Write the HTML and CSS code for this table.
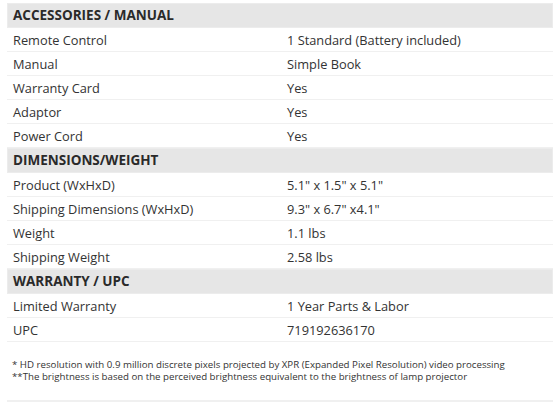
FILE: index.html
```html
<!DOCTYPE html>
<html>
<head>
<meta charset="utf-8">
<link rel="stylesheet" href="styles.css">
</head>
<body>
<div class="spec">
  <div class="head">ACCESSORIES / MANUAL</div>
  <div class="row"><span class="k">Remote Control</span><span class="v">1 Standard (Battery included)</span></div>
  <div class="row"><span class="k">Manual</span><span class="v">Simple Book</span></div>
  <div class="row"><span class="k">Warranty Card</span><span class="v">Yes</span></div>
  <div class="row"><span class="k">Adaptor</span><span class="v">Yes</span></div>
  <div class="row"><span class="k">Power Cord</span><span class="v">Yes</span></div>
  <div class="head">DIMENSIONS/WEIGHT</div>
  <div class="row"><span class="k">Product (WxHxD)</span><span class="v">5.1" x 1.5" x 5.1"</span></div>
  <div class="row"><span class="k">Shipping Dimensions (WxHxD)</span><span class="v">9.3" x 6.7" x4.1"</span></div>
  <div class="row"><span class="k">Weight</span><span class="v">1.1 lbs</span></div>
  <div class="row"><span class="k">Shipping Weight</span><span class="v">2.58 lbs</span></div>
  <div class="head">WARRANTY / UPC</div>
  <div class="row"><span class="k">Limited Warranty</span><span class="v">1 Year Parts &amp; Labor</span></div>
  <div class="row"><span class="k">UPC</span><span class="v">719192636170</span></div>
  <div class="notes">
    <p>* HD resolution with 0.9 million discrete pixels projected by XPR (Expanded Pixel Resolution) video processing</p>
    <p>**The brightness is based on the perceived brightness equivalent to the brightness of lamp projector</p>
  </div>
</div>
</body>
</html>
```
FILE: styles.css
```css
html, body { margin: 0; padding: 0; background: #fff; }
body { padding: 3px 6px 0 7px; font-family: "Open Sans", "Noto Sans", sans-serif; color: #333; }
.spec { width: 546px; }
.head {
  height: 25px; box-sizing: border-box;
  background: #e6e6e6; border: 1px solid #ececec;
  font-weight: 700; font-size: 13.5px; line-height: 23px;
  padding-left: 5px; color: #2a2a2a;
}
.row {
  display: grid; grid-template-columns: 280px 1fr;
  height: 24px; box-sizing: border-box;
  border-bottom: 1px solid #f0f0f0;
  font-size: 12.8px; line-height: 25px;
}
.row .k { padding-left: 6px; }
.notes {
  margin-top: 17px; padding: 0 0 17px 5px;
  font-size: 9.7px; line-height: 12px;
  border-bottom: 2px solid #f0f0f0;
}
.notes p { margin: 0; white-space: nowrap; }
```
